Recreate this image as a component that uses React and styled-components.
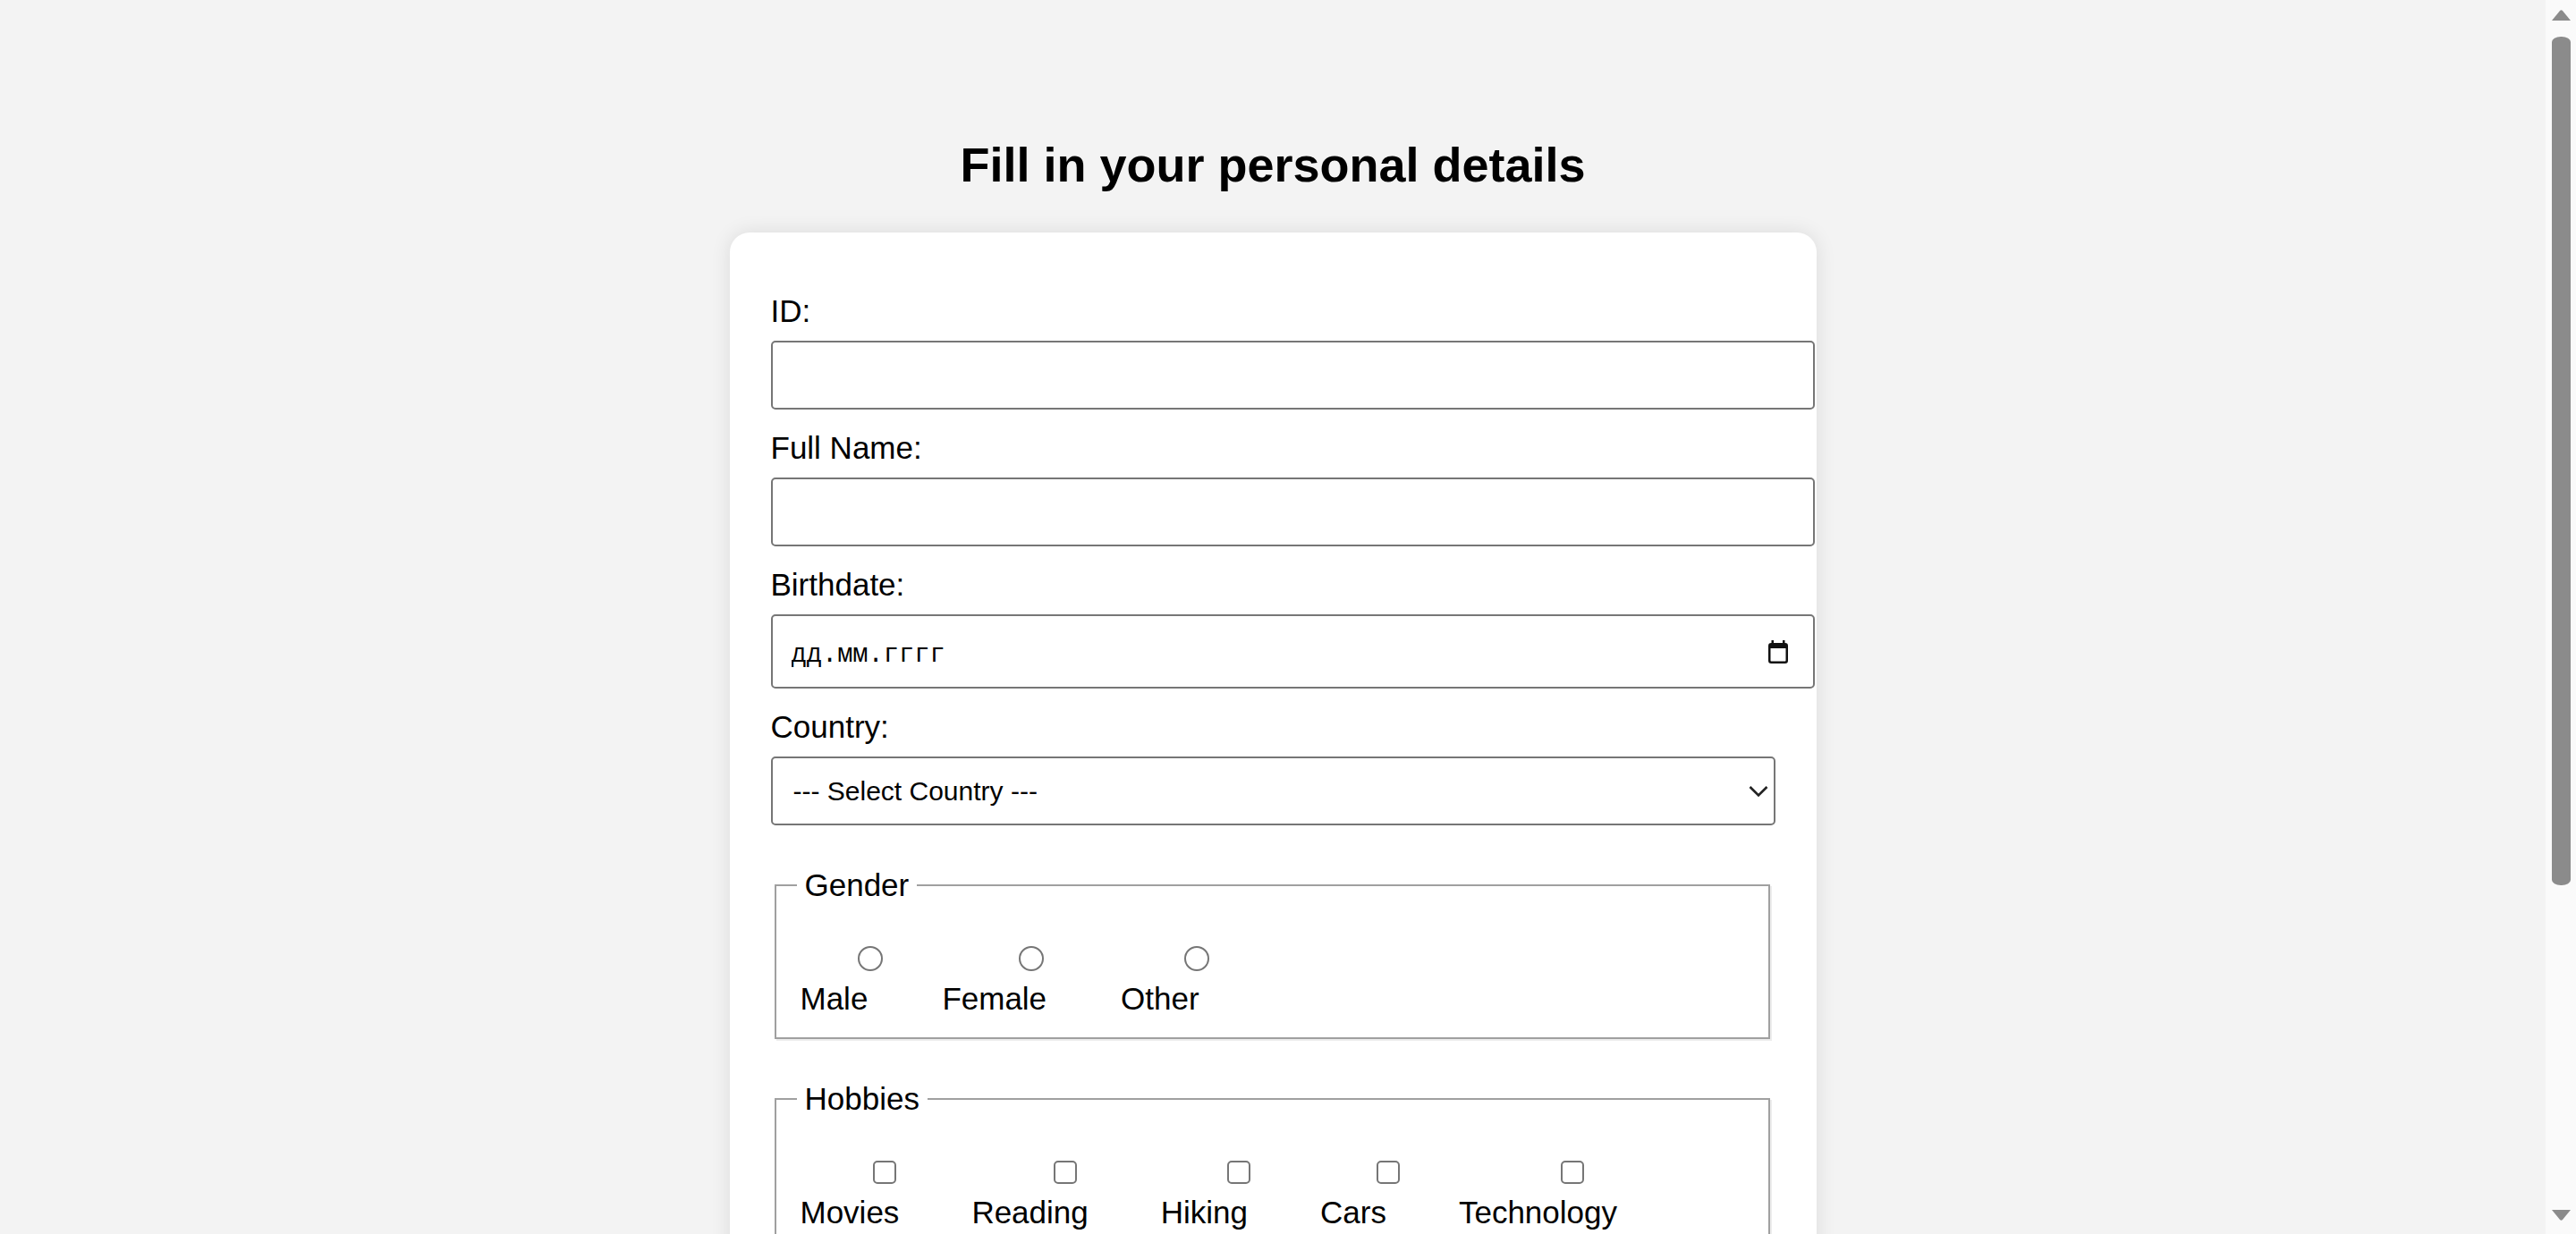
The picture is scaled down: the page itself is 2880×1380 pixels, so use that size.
import React from "react";
import styled, { createGlobalStyle } from "styled-components";

const GlobalStyle = createGlobalStyle`
  html, body {
    margin: 0;
    padding: 0;
    height: 100%;
    overflow: hidden;
    background: #f3f3f3;
    font-family: "Liberation Sans", Arial, sans-serif;
    color: #000;
  }
  #root { height: 100%; }
`;

const Shell = styled.div`
  display: flex;
  height: 100vh;
`;

const Viewport = styled.div`
  flex: 1;
  min-width: 0;
  overflow-y: auto;
  scrollbar-width: none;
  &::-webkit-scrollbar { display: none; }
`;

const ScrollBar = styled.aside`
  flex: none;
  width: 34px;
  display: flex;
  flex-direction: column;
  background: #fafafa;
`;

const ScrollButton = styled.div`
  flex: none;
  height: 34px;
  display: flex;
  justify-content: center;
  align-items: ${(p) => (p.$down ? "flex-start" : "flex-end")};
  padding: ${(p) => (p.$down ? "7px 0 0" : "0 0 11px")};
  box-sizing: border-box;
`;

const ScrollTrack = styled.div`
  flex: 1;
  display: flex;
  flex-direction: column;
  align-items: center;
  padding-top: 7px;
`;

const Thumb = styled.div`
  width: 21px;
  height: 949px;
  background: #8b8b8b;
  border-radius: 10px / 6px;
`;

const Page = styled.main`
  display: flex;
  flex-direction: column;
  align-items: center;
  padding: 153px 0 329px;
`;

const Title = styled.h1`
  margin: 0 0 45px;
  font-size: 54px;
  line-height: 62px;
  font-weight: bold;
`;

const Card = styled.form`
  width: 1215px;
  box-sizing: border-box;
  padding: 45px 46px 46px;
  background: #fff;
  border-radius: 22px;
  box-shadow: 0 0 22px rgba(0, 0, 0, 0.1);
`;

const FieldLabel = styled.label`
  display: block;
  margin: 22px 0 12px;
  font-size: 35px;
  line-height: 42px;
`;

const TextInput = styled.input`
  display: block;
  box-sizing: border-box;
  width: calc(100% + 44px);
  height: 77px;
  margin: 0;
  padding: 0 21px;
  border: 2px solid #767676;
  border-radius: 5px;
  background: #fff;
  font-family: "Liberation Sans", Arial, sans-serif;
  font-size: 30px;
  color: #000;
  outline: none;
`;

const DateBox = styled.div`
  display: flex;
  align-items: center;
  box-sizing: border-box;
  width: calc(100% + 44px);
  height: 83px;
  padding: 0 28px 0 21px;
  border: 2px solid #767676;
  border-radius: 5px;
  background: #fff;
`;

const DateText = styled.input`
  flex: 1;
  min-width: 0;
  margin: 7px 0 0;
  padding: 0;
  border: none;
  outline: none;
  background: transparent;
  font-family: "Liberation Mono", "DejaVu Sans Mono", monospace;
  font-size: 28.7px;
  color: #000;
  &::placeholder {
    color: #000;
    opacity: 1;
  }
`;

const SelectWrap = styled.div`
  position: relative;
  width: 100%;
`;

const Select = styled.select`
  display: block;
  appearance: none;
  box-sizing: border-box;
  width: 100%;
  height: 77px;
  margin: 0;
  padding: 0 60px 0 23px;
  border: 2px solid #767676;
  border-radius: 5px;
  background: #fff;
  font-family: "Liberation Sans", Arial, sans-serif;
  font-size: 30px;
  color: #000;
  outline: none;
`;

const Chevron = styled.svg`
  position: absolute;
  right: 8px;
  top: 50%;
  transform: translateY(-50%);
  pointer-events: none;
`;

const Group = styled.fieldset`
  margin: 46px 6px 0 4px;
  padding: 0 27px 23px;
  border: 2px solid #a0a0a0;
  box-shadow: 2px 2px 0 #ededed;
  min-width: 0;
`;

const Legend = styled.legend`
  margin-left: -4px;
  padding: 0 9px;
  font-size: 35px;
  line-height: 42px;
`;

const Options = styled.div`
  display: flex;
  gap: ${(p) => p.$gap}px;
`;

const Option = styled.label`
  display: flex;
  flex-direction: column;
  align-items: stretch;
`;

const ControlRow = styled.span`
  display: flex;
  justify-content: center;
  align-items: center;
  height: 28px;
  margin: 47px ${(p) => -p.$shift}px 10px ${(p) => p.$shift}px;
`;

const Radio = styled.input.attrs({ type: "radio" })`
  appearance: none;
  box-sizing: border-box;
  width: 28px;
  height: 28px;
  margin: 0;
  border: 2px solid #767676;
  border-radius: 50%;
  background: #fff;
`;

const Checkbox = styled.input.attrs({ type: "checkbox" })`
  appearance: none;
  box-sizing: border-box;
  width: 26px;
  height: 26px;
  margin: 0;
  border: 2px solid #767676;
  border-radius: 5px;
  background: #fff;
`;

const OptionText = styled.span`
  font-size: 35px;
  line-height: 41px;
  white-space: nowrap;
`;

const SubmitButton = styled.button`
  display: block;
  margin: 46px 0 0;
  height: 84px;
  padding: 0 45px;
  border: 2px solid #767676;
  border-radius: 5px;
  background: #efefef;
  font-family: "Liberation Sans", Arial, sans-serif;
  font-size: 30px;
  color: #000;
`;

const CalendarIcon = () => (
  <svg width="22" height="27" viewBox="0 0 22 27" aria-hidden="true">
    <rect x="1.25" y="5.25" width="19.5" height="20.5" rx="2" fill="none" stroke="#111" strokeWidth="2.5" />
    <rect x="1" y="5" width="20" height="5" fill="#111" />
    <rect x="3.5" y="1" width="2.5" height="5" fill="#111" />
    <rect x="16" y="1" width="2.5" height="5" fill="#111" />
  </svg>
);

const Arrow = ({ down }) => (
  <svg width="21" height="12" viewBox="0 0 21 12" aria-hidden="true">
    <path d={down ? "M0 0 H21 L12 11 Q10.5 12.5 9 11 Z" : "M0 12 H21 L12 1 Q10.5 -0.5 9 1 Z"} fill="#8b8b8b" />
  </svg>
);

const genders = ["Male", "Female", "Other"];
const hobbies = ["Movies", "Reading", "Hiking", "Cars", "Technology"];

export default function App() {
  return (
    <>
      <GlobalStyle />
      <Shell>
        <Viewport>
          <Page>
            <Title>Fill in your personal details</Title>
            <Card onSubmit={(e) => e.preventDefault()}>
              <FieldLabel htmlFor="id">ID:</FieldLabel>
              <TextInput id="id" type="text" />

              <FieldLabel htmlFor="fullname">Full Name:</FieldLabel>
              <TextInput id="fullname" type="text" />

              <FieldLabel htmlFor="birthdate">Birthdate:</FieldLabel>
              <DateBox>
                <DateText id="birthdate" type="text" placeholder="дд.мм.гггг" readOnly />
                <CalendarIcon />
              </DateBox>

              <FieldLabel htmlFor="country">Country:</FieldLabel>
              <SelectWrap>
                <Select id="country" defaultValue="">
                  <option value="">--- Select Country ---</option>
                  <option value="us">United States</option>
                  <option value="uk">United Kingdom</option>
                  <option value="de">Germany</option>
                </Select>
                <Chevron width="22" height="13" viewBox="0 0 22 13" aria-hidden="true">
                  <path d="M1.5 1.5 L11 11 L20.5 1.5" fill="none" stroke="#222" strokeWidth="2.6" />
                </Chevron>
              </SelectWrap>

              <Group>
                <Legend>Gender</Legend>
                <Options $gap={83}>
                  {genders.map((g) => (
                    <Option key={g}>
                      <ControlRow $shift={41}>
                        <Radio name="gender" value={g.toLowerCase()} />
                      </ControlRow>
                      <OptionText>{g}</OptionText>
                    </Option>
                  ))}
                </Options>
              </Group>

              <Group>
                <Legend>Hobbies</Legend>
                <Options $gap={81}>
                  {hobbies.map((h) => (
                    <Option key={h}>
                      <ControlRow $shift={39}>
                        <Checkbox name="hobbies" value={h.toLowerCase()} />
                      </ControlRow>
                      <OptionText>{h}</OptionText>
                    </Option>
                  ))}
                </Options>
              </Group>

              <SubmitButton type="submit">Submit</SubmitButton>
            </Card>
          </Page>
        </Viewport>
        <ScrollBar aria-hidden="true">
          <ScrollButton>
            <Arrow />
          </ScrollButton>
          <ScrollTrack>
            <Thumb />
          </ScrollTrack>
          <ScrollButton $down>
            <Arrow down />
          </ScrollButton>
        </ScrollBar>
      </Shell>
    </>
  );
}
